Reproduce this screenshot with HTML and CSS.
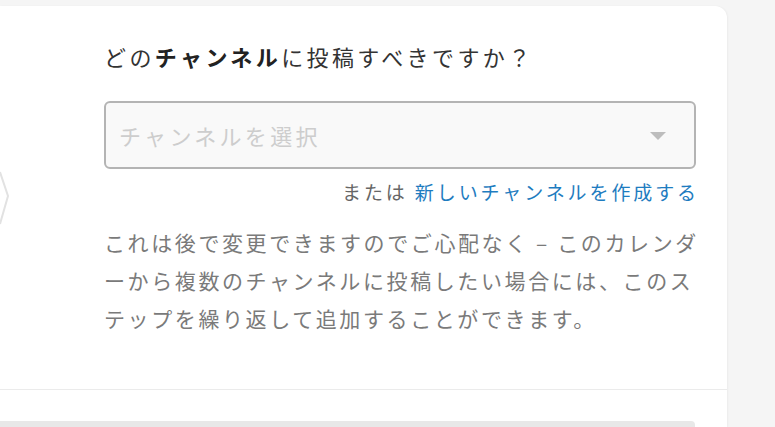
FILE: index.html
```html
<!DOCTYPE html>
<html lang="ja">
<head>
<meta charset="utf-8">
<link rel="stylesheet" href="styles.css">
</head>
<body>
<div class="page">
  <div class="card">
    <svg class="chevron" width="12" height="70" viewBox="0 0 12 70"><polyline points="0,10 8,34 0,62" fill="none" stroke="#e2e2e2" stroke-width="2"/></svg>
    <div class="content">
      <h2 class="title">どの<b>チャンネル</b>に投稿すべきですか？</h2>
      <div class="select">
        <span class="placeholder">チャンネルを選択</span>
        <span class="caret"></span>
      </div>
      <div class="or-line">または <a class="link" href="#">新しいチャンネルを作成する</a></div>
      <p class="note">これは後で変更できますのでご心配なく – このカレンダ<br>ーから複数のチャンネルに投稿したい場合には、このス<br>テップを繰り返して追加することができます。</p>
    </div>
    <div class="divider"></div>
    <div class="next-bar"></div>
  </div>
</div>
</body>
</html>
```

FILE: styles.css
```css
html, body {
  margin: 0;
  padding: 0;
  background: #f5f5f5;
  font-family: "Noto Sans CJK JP", "Noto Sans", sans-serif;
  overflow: hidden;
}
.page {
  padding-top: 6px;
  height: 421px;
}
.card {
  position: relative;
  width: 727px;
  height: 421px;
  background: #fff;
  border-top-right-radius: 12px;
  box-shadow: 1px 0 2px rgba(0,0,0,0.04);
  display: flex;
  flex-direction: column;
}
.chevron {
  position: absolute;
  left: 0;
  top: 156px;
}
.content {
  padding: 35px 0 0 104px;
  width: 592px;
}
.title {
  margin: 0;
  font-size: 22px;
  line-height: 30px;
  letter-spacing: 3.4px;
  font-weight: normal;
  color: #333;
  white-space: nowrap;
}
.title b {
  font-weight: bold;
  color: #222;
}
.select {
  margin-top: 30px;
  height: 68px;
  box-sizing: border-box;
  border: 2px solid #b4b4b4;
  border-radius: 6px;
  background: #f9f9f9;
  display: flex;
  align-items: center;
  justify-content: space-between;
  padding: 0 28px 0 13px;
}
.placeholder {
  font-size: 22px;
  letter-spacing: 3.3px;
  color: #cdcdcd;
  white-space: nowrap;
}
.caret {
  width: 0;
  height: 0;
  border-left: 8px solid transparent;
  border-right: 8px solid transparent;
  border-top: 8px solid #bdbdbd;
  margin-top: 2px;
}
.or-line {
  margin-top: 11px;
  text-align: right;
  font-size: 19px;
  line-height: 24px;
  letter-spacing: 2.9px;
  color: #666;
  margin-right: -3px;
  white-space: nowrap;
}
.link {
  color: #1e7cc0;
  text-decoration: none;
}
.note {
  margin: 19px 0 0;
  font-size: 21px;
  line-height: 38px;
  letter-spacing: 2.6px;
  color: #7a7a7a;
  white-space: nowrap;
}
.divider {
  margin-top: 52px;
  height: 2px;
  background: #ebebeb;
}
.next-bar {
  margin-top: 31px;
  width: 695px;
  height: 12px;
  background: #e8e8e8;
  border-top-right-radius: 4px;
}
```
